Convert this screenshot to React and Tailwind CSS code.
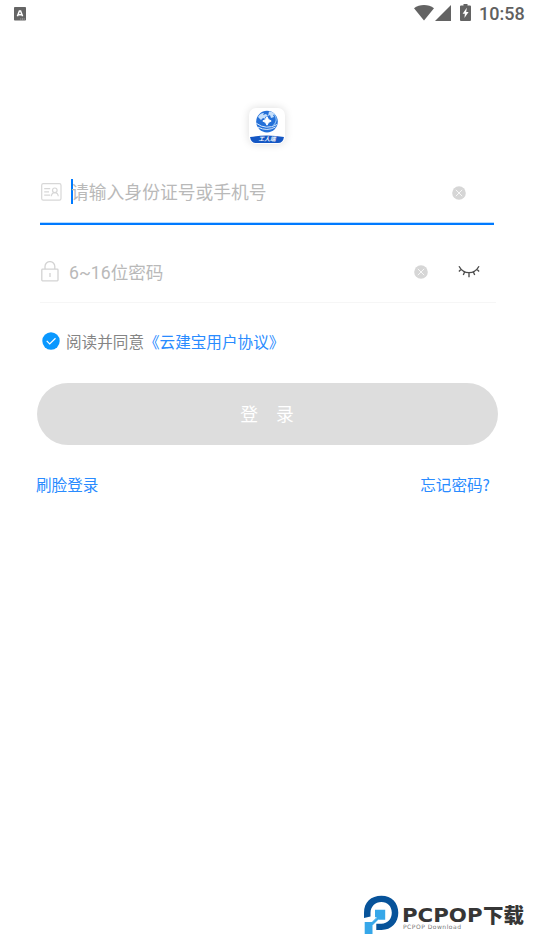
import { useState } from 'react';

// --- Icons ---
const KeyboardIcon = () => (
  <svg width="12" height="14" viewBox="0 0 12 14">
    <rect width="12" height="13.5" rx="0.8" fill="#656565" />
    <path d="M3.4 9.3L5.4 4h1.2l2 5.3M4.2 7.7h3.6" fill="none" stroke="#fff" strokeWidth="1.5" />
    <path d="M6.3 12h1M8 12h1M9.7 12h1" stroke="#ddd" strokeWidth="0.7" />
  </svg>
);
const WifiIcon = () => (
  <svg width="20" height="16" viewBox="0 0 20 16" fill="#636363"><path d="M0 3.3C5.5-1.1 14.5-1.1 20 3.3L10 15.6z" /></svg>
);
const SignalIcon = () => (
  <svg width="16" height="16" viewBox="0 0 16 16" fill="#636363"><path d="M16 0v16H0z" /></svg>
);
const BatteryIcon = () => (
  <svg width="11" height="17" viewBox="0 0 11 17">
    <path d="M3.5 0h4v1.6H10q1 0 1 1V16q0 1-1 1H1q-1 0-1-1V2.6q0-1 1-1h2.5z" fill="#636363" />
    <path d="M6.8 3.8L2.6 9.8h2.3l-.5 4.3 4.2-6H6.2z" fill="#fff" />
  </svg>
);
const CardIcon = () => (
  <svg width="21" height="18" viewBox="0 0 21 18" fill="none" stroke="#d7d7d7" strokeWidth="1.2">
    <rect x="0.7" y="0.7" width="19.3" height="16.4" rx="1.6" />
    <path d="M3.2 5.7h6M3.2 8.9h4.8M3.2 12.1h6" />
    <circle cx="13.8" cy="7.3" r="2.3" />
    <path d="M10.3 13.3c.3-2.4 1.4-3.7 3.5-3.7s3.2 1.3 3.5 3.7" />
  </svg>
);
const LockIcon = () => (
  <svg width="18" height="21" viewBox="0 0 18 21" fill="none" stroke="#d3d3d3" strokeWidth="1.3">
    <rect x="0.8" y="8.2" width="16.2" height="11.6" rx="0.7" />
    <path d="M4 8V5.5a4.9 4.9 0 0 1 9.8 0V8M9 12v4" />
  </svg>
);
const ClearIcon = () => (
  <svg width="14" height="14" viewBox="0 0 14 14">
    <circle cx="7" cy="7" r="6.8" fill="#d6d6d6" />
    <path d="M3.8 3.8l6.4 6.4M10.2 3.8l-6.4 6.4" stroke="#fff" strokeWidth="0.8" />
  </svg>
);
const ClosedEyeIcon = () => (
  <svg width="22" height="13" viewBox="0 0 22 13" fill="none" stroke="#4c4c4c" strokeWidth="1.35">
    <path d="M1 1.2C5.7 9.8 16.3 9.8 21 1.2M3.4 4L.9 6.4M6.7 6.7L5.3 10M11 7.7v4.6M15.3 6.7l1.4 3.3M18.6 4l2.5 2.4" />
  </svg>
);
const CheckIcon = () => (
  <svg width="18" height="18" viewBox="0 0 18 18">
    <circle cx="9" cy="9" r="8.7" fill="#0a98ff" />
    <path d="M4.7 8.9l3 3 5.8-5.7" fill="none" stroke="#fff" strokeWidth="1.2" />
  </svg>
);
const AppLogo = () => (
  <svg width="36" height="36" viewBox="0 0 36 36">
    <circle cx="18" cy="13.6" r="10.8" fill="#2470d8" />
    <path d="M9 9q2-4 6-4l-1 2 3-1 2 2-3 1 1 2-3-1-2 2zM20 3.5q4 0 6 3l-2 .5 1 2-3 1-1-3-2 1z" fill="#c5dffb" />
    <path d="M18 8.8l1.5 2.7 2.7 1.5-2.7 1.5-1.5 2.7-1.5-2.7-2.7-1.5 2.7-1.5z" fill="#fff" stroke="#fff" strokeWidth="1" />
    <path d="M7.3 15.3q9.7 7.2 20.9 1.2M9 19.2q9 4.6 17.5-.2" fill="none" stroke="#d8eaff" strokeWidth="1" />
    <path d="M25 6q5 6-1 12" fill="none" stroke="#8abff5" strokeWidth="1.1" />
    <path d="M1 29q17-3 34 0-1 6-6 6H7q-5 0-6-6z" fill="#1557c4" />
    <text x="18" y="33.4" textAnchor="middle" textLength="17" fill="#fff" className="font-['Noto_Sans_CJK_SC',sans-serif] text-[5.6px] font-bold italic">工人端</text>
  </svg>
);
const SiteMark = () => (
  <svg width="35" height="40" viewBox="0 0 35 40">
    <path d="M0 23V18C0 7 7 .8 17.4 .8S34.3 8 34.3 17.8 27.5 35 17.4 35h-5.1v-6.3h5.1c6.3 0 10.4-4.7 10.4-10.9S23.6 7.1 17.4 7.1 6.5 11.6 6.5 18v3.4z" fill="#07539a" />
    <path d="M11 14.7h10.2v10H14L8.5 30.3V39H.7V27h7l5-4.7H11z" fill="#36a7e9" />
    <path d="M8 27l5-4.5M8.5 30.3l5.8-5.6" stroke="#a0d6f5" strokeWidth="0.8" />
  </svg>
);

function StatusBar() {
  return (
    <header className="flex h-7 items-start pt-[5px] pl-[14px] pr-[9px]">
      <div className="pt-[2px]"><KeyboardIcon /></div>
      <div className="ml-auto flex items-start text-[#606060]">
        <WifiIcon />
        <div className="ml-[1px]"><SignalIcon /></div>
        <div className="ml-[9px] -mt-[1px]"><BatteryIcon /></div>
        <span className="ml-2 w-[46px] whitespace-nowrap font-['Roboto',sans-serif] text-[18px] leading-[18px] font-medium">10:58</span>
      </div>
    </header>
  );
}

function Watermark() {
  return (
    <footer className="mt-auto mb-[15px] mr-[9px] flex h-10 items-start self-end">
      <SiteMark />
      <div className="ml-[3px] w-[123px] pt-[10px] text-[#363636]">
        <div className="flex h-[18px] items-center whitespace-nowrap font-bold">
          <span className="flex w-[81px] pt-[1px]">
            <span className="inline-block origin-left scale-x-[1.12] font-['DejaVu_Sans',sans-serif] text-[19px] leading-[16px]">PCPOP</span>
          </span>
          <span className="font-['Noto_Sans_CJK_SC',sans-serif] text-[20.5px] leading-[18px] font-black">下载</span>
        </div>
        <div className="mt-[1px] pl-[1px] font-['DejaVu_Sans',sans-serif] text-[6px] leading-[6px] tracking-[0.5px] whitespace-nowrap text-[#777]">PCPOP Download</div>
      </div>
    </footer>
  );
}

export default function App() {
  const [agreed, setAgreed] = useState(true);
  const [hidden, setHidden] = useState(true);

  return (
    <div lang="zh-CN" className="flex h-[950px] w-[534px] flex-col overflow-hidden bg-white font-['Roboto','Noto_Sans_CJK_SC',sans-serif]">
      <StatusBar />

      <main>
        <div className="mx-auto mt-[80px] h-9 w-9 rounded-[7px] bg-white shadow-[0_0_8px_rgba(0,0,0,0.14)]">
          <AppLogo />
        </div>

        {/* Account */}
        <div className="mx-10 mt-[15px] flex h-[66px] items-center border-b-[2px] border-[#007aff] pt-[2px] pl-[1px] shadow-[inset_0_-1px_0_#b8dcff]">
          <CardIcon />
          <div className="mb-[2px] ml-[9px] h-[25px] w-[2px] bg-[#007aff]" />
          <span className="-ml-[2px] pt-[2px] text-[17.8px] leading-6 whitespace-nowrap text-[#b9b9b9]">请输入身份证号或手机号</span>
          <button className="mr-[28px] ml-auto pt-[2px]"><ClearIcon /></button>
        </div>

        {/* Password */}
        <div className="mr-[38px] ml-10 flex h-[78px] items-center border-b border-[#f6f6f6] pt-[16px] pl-[1px]">
          <LockIcon />
          <span className="ml-[10px] pt-[2px] text-[17.6px] leading-6 whitespace-nowrap text-[#b9b9b9]">6~16位密码</span>
          <button className="mr-[30px] ml-auto"><ClearIcon /></button>
          <button className="mr-4" onClick={() => setHidden(!hidden)}><ClosedEyeIcon /></button>
        </div>

        <div className="ml-[42px] mt-[26px] flex h-6 items-center text-[15.6px] leading-6 whitespace-nowrap">
          <button onClick={() => setAgreed(!agreed)}>{agreed && <CheckIcon />}</button>
          <span className="ml-[6px] pt-[3px] text-[#858585]">阅读并同意</span>
          <a className="pt-[3px] text-[#298bff]">《云建宝用户协议》</a>
        </div>

        <button className="ml-[36.5px] mt-[30px] flex h-[62px] w-[461px] items-center justify-center gap-[18px] rounded-full bg-[#ddd] pt-[2px] text-[17.8px] text-white">
          <span>登</span>
          <span>录</span>
        </button>

        <div className="mt-[27px] flex pr-[44px] pl-[36px] font-['Noto_Sans_CJK_SC',sans-serif] text-[15.6px] leading-6 text-[#298bff]">
          <a>刷脸登录</a>
          <a className="ml-auto">忘记密码?</a>
        </div>
      </main>

      <Watermark />
    </div>
  );
}
